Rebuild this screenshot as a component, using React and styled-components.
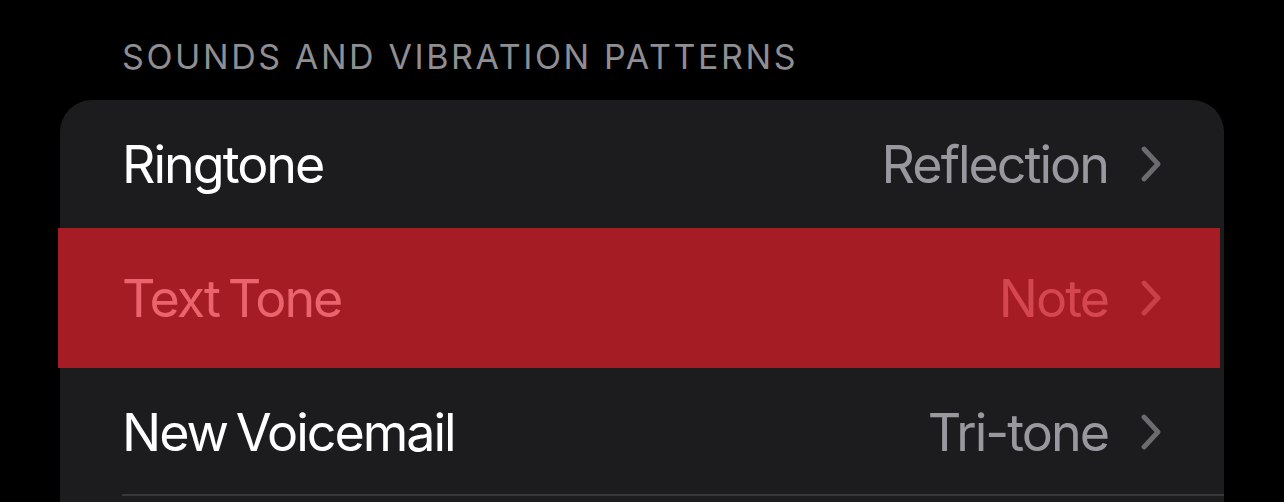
import React from "react";
import styled, { createGlobalStyle } from "styled-components";

const GlobalStyle = createGlobalStyle`
  html, body {
    margin: 0;
    padding: 0;
    background: #000;
  }
  body {
    font-family: Inter, "Noto Sans", "Liberation Sans", sans-serif;
    -webkit-font-smoothing: antialiased;
  }
`;

const StyledScreen = styled.div`
  width: 1284px;
  height: 502px;
  overflow: hidden;
  background: #000;
  padding: 0 60px;
  box-sizing: border-box;
`;

const StyledSectionHeader = styled.div`
  padding: 37px 0 0 62px;
  height: 40px;
  margin-bottom: 23px;
  font-size: 34px;
  line-height: 40px;
  color: #8e8e93;
  letter-spacing: 2.6px;
`;

const StyledCard = styled.div`
  background: #1c1c1e;
  border-radius: 32px 32px 0 0;
  height: 420px;
`;

const StyledRow = styled.div`
  display: flex;
  align-items: center;
  height: ${({ $highlight }) => ($highlight ? "140px" : "128px")};
  margin: ${({ $highlight }) => ($highlight ? "0 4px 0 -2px" : "0")};
  padding: ${({ $highlight }) => ($highlight ? "0 58px 0 64px" : "0 62px")};
  background: ${({ $highlight }) => ($highlight ? "#a51c24" : "transparent")};
  position: relative;
  font-size: 52px;
  letter-spacing: -2px;
  word-spacing: -4px;

  &::after {
    content: "";
    display: ${({ $divider }) => ($divider ? "block" : "none")};
    position: absolute;
    left: 62px;
    right: 0;
    bottom: 0;
    height: 2px;
    background: #38383a;
  }
`;

const StyledLabel = styled.span`
  flex: 1;
  color: ${({ $highlight }) => ($highlight ? "#e9646d" : "#ffffff")};
`;

const StyledValue = styled.span`
  color: ${({ $highlight }) => ($highlight ? "#d44650" : "#98989e")};
  margin-right: 32px;
`;

const StyledChevron = styled.svg`
  width: 22px;
  height: 36px;
  flex-shrink: 0;
`;

function Chevron({ highlight }) {
  return (
    <StyledChevron viewBox="0 0 22 36">
      <path
        d="M4 3 L18 18 L4 33"
        fill="none"
        stroke={highlight ? "#c9404a" : "#6c6c70"}
        strokeWidth="4.8"
        strokeLinecap="round"
        strokeLinejoin="round"
      />
    </StyledChevron>
  );
}

const rows = [
  { label: "Ringtone", value: "Reflection" },
  { label: "Text Tone", value: "Note", highlight: true },
  { label: "New Voicemail", value: "Tri-tone", divider: true },
];

function App() {
  return (
    <>
      <GlobalStyle />
      <StyledScreen>
        <StyledSectionHeader>SOUNDS AND VIBRATION PATTERNS</StyledSectionHeader>
        <StyledCard>
          {rows.map((row) => (
            <StyledRow key={row.label} $highlight={row.highlight} $divider={row.divider}>
              <StyledLabel $highlight={row.highlight}>{row.label}</StyledLabel>
              <StyledValue $highlight={row.highlight}>{row.value}</StyledValue>
              <Chevron highlight={row.highlight} />
            </StyledRow>
          ))}
        </StyledCard>
      </StyledScreen>
    </>
  );
}

export default App;
